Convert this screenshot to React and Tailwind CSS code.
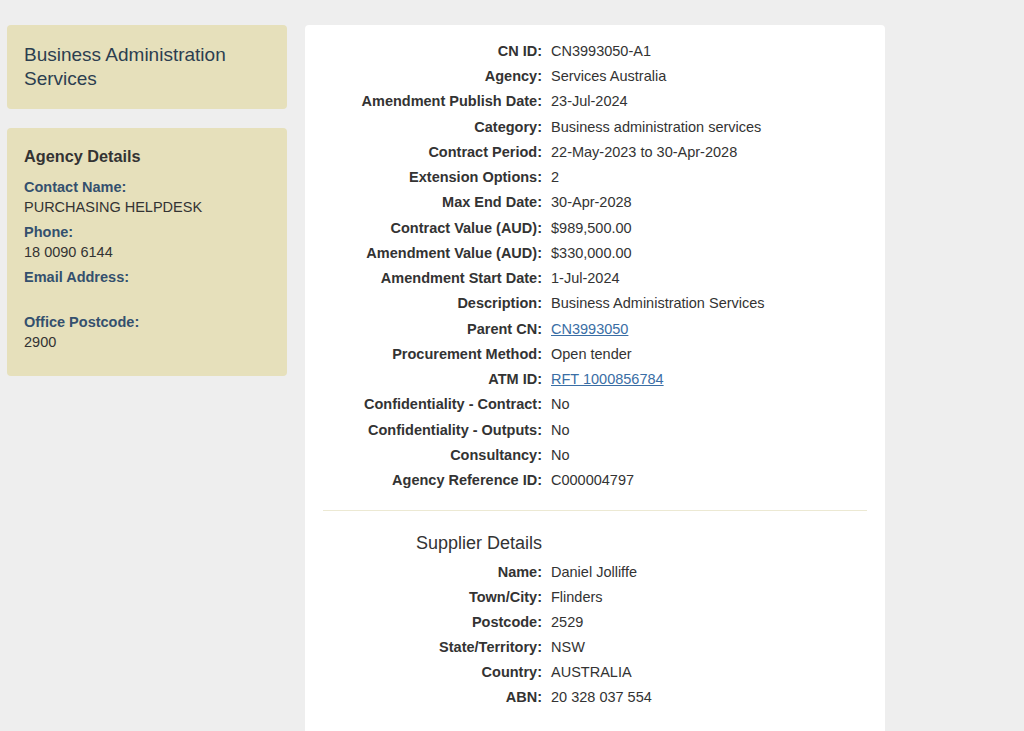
const contractRows = [
  ['CN ID', 'CN3993050-A1'],
  ['Agency', 'Services Australia'],
  ['Amendment Publish Date', '23-Jul-2024'],
  ['Category', 'Business administration services'],
  ['Contract Period', '22-May-2023 to 30-Apr-2028'],
  ['Extension Options', '2'],
  ['Max End Date', '30-Apr-2028'],
  ['Contract Value (AUD)', '$989,500.00'],
  ['Amendment Value (AUD)', '$330,000.00'],
  ['Amendment Start Date', '1-Jul-2024'],
  ['Description', 'Business Administration Services'],
  ['Parent CN', 'CN3993050', true],
  ['Procurement Method', 'Open tender'],
  ['ATM ID', 'RFT 1000856784', true],
  ['Confidentiality - Contract', 'No'],
  ['Confidentiality - Outputs', 'No'],
  ['Consultancy', 'No'],
  ['Agency Reference ID', 'C000004797'],
];

const supplierRows = [
  ['Name', 'Daniel Jolliffe'],
  ['Town/City', 'Flinders'],
  ['Postcode', '2529'],
  ['State/Territory', 'NSW'],
  ['Country', 'AUSTRALIA'],
  ['ABN', '20 328 037 554'],
];

const agencyDetails = [
  ['Contact Name', 'PURCHASING HELPDESK'],
  ['Phone', '18 0090 6144'],
  ['Email Address', ''],
  ['Office Postcode', '2900'],
];

function DetailRow({ label, value, link, tall }) {
  return (
    <div className={tall ? 'flex h-[25.25px] items-center' : 'flex h-[25px] items-center'}>
      <div className="w-[219px] shrink-0 text-right font-bold">{label}:</div>
      <div className="pl-[9px]">
        {link ? (
          <a href="#" className="text-[#3a6ea5] underline">
            {value}
          </a>
        ) : (
          value
        )}
      </div>
    </div>
  );
}

export default function App() {
  return (
    <div
      className="min-h-screen bg-[#eeeeee] pl-[7px] pt-[25px] text-[14.5px] text-[#333333]"
      style={{ fontFamily: '"Liberation Sans", Arial, sans-serif' }}
    >
      <div className="flex items-start gap-[18px]">
        {/* Sidebar */}
        <div className="flex w-[280px] shrink-0 flex-col gap-[19px]">
          <div className="rounded-[4px] bg-[#e6e0bb] px-[17px] py-[18px]">
            <h2 className="text-[19px] leading-[24px] text-[#2c3e50]">
              Business Administration Services
            </h2>
          </div>

          <div className="rounded-[4px] bg-[#e6e0bb] px-[17px] pb-[19px] pt-[18px]">
            <h3 className="mb-[11px] text-[16.25px] font-bold leading-[20px] text-[#333333]">
              Agency Details
            </h3>
            <dl>
              {agencyDetails.map(([label, value]) => (
                <div key={label} className="mb-[5px]">
                  <dt className="font-bold leading-[20px] text-[#34506e]">{label}:</dt>
                  <dd className="h-[20px] leading-[20px]">{value}</dd>
                </div>
              ))}
            </dl>
          </div>
        </div>

        {/* Main content */}
        <div className="min-h-[720px] w-[580px] rounded-[4px] bg-white px-[18px] pt-[14px]">
          <div>
            {contractRows.map(([label, value, link]) => (
              <DetailRow key={label} label={label} value={value} link={link} tall />
            ))}
          </div>

          <hr className="mt-[16px] border-t border-[#ece9d3]" />

          <h3 className="mt-[19px] pl-[93px] text-[18px] leading-[26px] text-[#333333]">
            Supplier Details
          </h3>
          <div className="mt-[5px] pb-[20px]">
            {supplierRows.map(([label, value]) => (
              <DetailRow key={label} label={label} value={value} />
            ))}
          </div>
        </div>
      </div>
    </div>
  );
}
